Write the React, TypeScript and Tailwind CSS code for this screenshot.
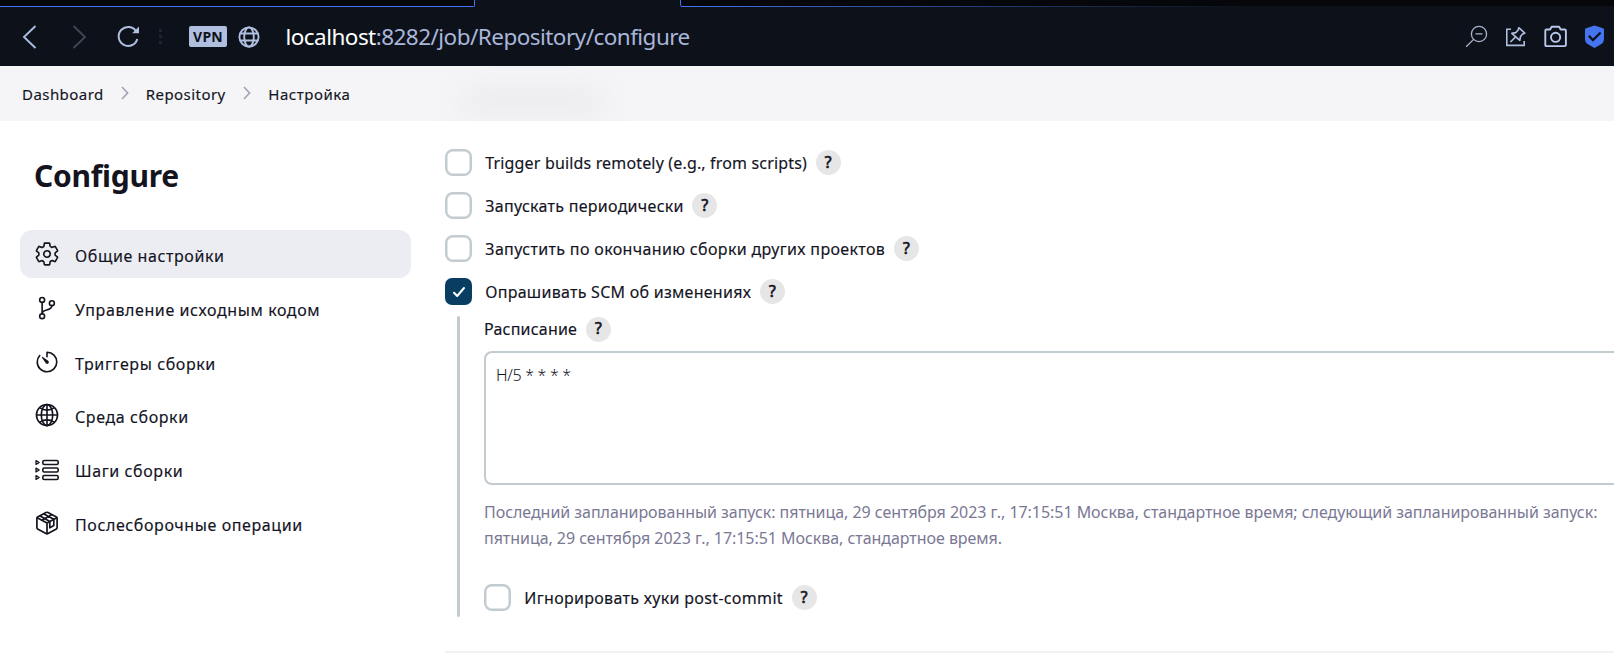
import type { ReactNode } from "react";
import {
  IoGitBranchOutline,
  IoGlobeOutline,
  IoSettingsOutline,
  IoTimerOutline,
} from "react-icons/io5";

function StepsIcon() {
  return (
    <svg className="relative top-[0.5px]" width="24" height="24" viewBox="0 0 24 24" fill="none" stroke="currentColor" strokeWidth="1.6" strokeLinejoin="round">
      <rect x="7.8" y="2.5" width="15.4" height="4" rx="1.5" />
      <rect x="7.8" y="10" width="15.4" height="4" rx="1.5" />
      <rect x="7.8" y="17.5" width="15.4" height="4" rx="1.5" />
      <path d="M1 2.6 4.2 4.5 1 6.4ZM1 10.1 4.2 12 1 13.9ZM1 17.6 4.2 19.5 1 21.4Z" strokeWidth="1.3" />
    </svg>
  );
}

function PackageIcon() {
  return (
    <svg className="relative top-[0.5px]" width="24" height="24" viewBox="0 0 24 24" fill="none" stroke="currentColor" strokeWidth="1.7" strokeLinejoin="round" strokeLinecap="round">
      <path d="M11 1.5Q12 1 13 1.5L21.4 6.1Q22.1 6.5 22.1 7.4V16.6Q22.1 17.5 21.4 17.9L13 22.6Q12 23.1 11 22.6L2.6 17.9Q1.9 17.5 1.9 16.6V7.4Q1.9 6.5 2.6 6.1Z" />
      <path d="M2.2 6.8 12 12 21.8 6.8M12 12V22.4" />
      <path d="M5.2 5 14.8 10.4V16.8L18.8 14.6V8.2L9 2.9M7.3 8.9 16.2 4.1" />
    </svg>
  );
}

const navItems: { label: string; icon: ReactNode; active?: boolean }[] = [
  { label: "Общие настройки", icon: <IoSettingsOutline size={26} />, active: true },
  { label: "Управление исходным кодом", icon: <IoGitBranchOutline size={26} /> },
  { label: "Триггеры сборки", icon: <IoTimerOutline size={26} /> },
  { label: "Среда сборки", icon: <IoGlobeOutline size={26} /> },
  { label: "Шаги сборки", icon: <StepsIcon /> },
  { label: "Послесборочные операции", icon: <PackageIcon /> },
];

function BrowserChrome() {
  return (
    <header className="h-[66px] bg-[#0d121a]">
      <div className="flex h-[7px] justify-between">
        <div className="w-[475px] rounded-br-[2px] border-r border-b border-[#4574f5] bg-[#06070b]" />
        <div className="flex w-[934px] flex-col rounded-bl-[3px] border-l border-[#4574f5] bg-[#06070b]">
          <div className="mt-auto h-px bg-linear-to-r from-[#4574f5] to-[#0d121a] to-60%" />
        </div>
      </div>
      <div className="flex h-[59px] items-center pl-[20px] text-[#b0bfe6]">
        <svg width="120" height="26" viewBox="20 0 120 26" fill="none" strokeWidth="1.9">
          <path d="M35.5 2 24 13 35.5 24" stroke="#a9bddf" />
          <path d="M73.5 2 85 13 73.5 24" stroke="#404552" />
          <path d="M136.3 7.5A9.5 9.5 0 1 0 137.3 15" stroke="#b0bfe0" strokeWidth="2" />
          <path d="M139 2.5V9.2H132.2Z" fill="#b0bfe0" />
        </svg>
        <div className="ml-[19px] flex w-[3px] flex-col gap-[3px]">
          <span className="size-[3px] bg-[#1d2330]" />
          <span className="size-[3px] bg-[#1d2330]" />
          <span className="size-[3px] bg-[#1d2330]" />
        </div>
        <div className="ml-[27px] flex h-[21px] w-[38px] items-center justify-center rounded-[2px] bg-[#b0bfe0] text-[14px] leading-none font-bold tracking-[0.2px] text-[#0d121a]">
          VPN
        </div>
        <svg className="ml-[10.5px]" width="22" height="22" viewBox="0 0 22 22" fill="none" stroke="#b0bfe0" strokeWidth="1.9">
          <circle cx="11" cy="11" r="9.6" />
          <ellipse cx="11" cy="11" rx="4.8" ry="9.6" />
          <path d="M2.3 7.5H19.7M2.3 14.5H19.7" />
        </svg>
        <div className="ml-[26px] text-[22.5px] leading-[30px] tracking-[-0.54px] whitespace-nowrap">
          <span className="text-white">localhost</span>
          <span className="text-[#aab6da]">:8282/job/Repository/configure</span>
        </div>
        <div className="mr-[9px] ml-auto flex items-center">
          <svg width="23" height="24" viewBox="0 0 23 24" fill="none" stroke="#a9b4cf" strokeWidth="1.3">
            <circle cx="14" cy="9" r="7.6" />
            <path d="M10.5 8.8H17.5M8.6 14.4 1.2 21.8" />
          </svg>
          <svg className="ml-[17px]" width="22" height="22" viewBox="0 0 22 22" fill="none" stroke="#b0bfe0" strokeWidth="1.6">
            <path d="M6 3.2H1.8V19.4H19.2V15" />
            <path d="M13.8 1.7 19.8 7.2 17.6 7.9 15.5 10.6 14.8 14.4 6.8 7.4 10.8 6.6 13 4.2Z" strokeLinejoin="round" />
            <path d="M10.4 11.2 5.4 16" />
          </svg>
          <svg className="ml-[17px]" width="24" height="24" viewBox="0.5 0.5 24 24" fill="none" stroke="#b9c7ea" strokeWidth="1.9" strokeLinejoin="round">
            <path d="M1.8 6.2Q1.8 5 3 5H6.6L8.2 2.2H15.6L17.2 5H21.2Q22.4 5 22.4 6.2V20.4Q22.4 21.6 21.2 21.6H3Q1.8 21.6 1.8 20.4Z" />
            <circle cx="12.1" cy="12.8" r="4.6" />
          </svg>
          <svg className="ml-[16px]" width="21" height="24" viewBox="0 0.5 21 24" fill="none">
            <path d="M10.5 1 19 3.8Q20 4.2 20 5.2V14.6Q20 17.4 17.8 19.2L10.5 23.6 3.2 19.2Q1 17.4 1 14.6V5.2Q1 4.2 2 3.8Z" fill="#4574f0" />
            <path d="M4.8 11.4 9 15.6 16.6 8" stroke="#0d121a" strokeWidth="2.2" />
          </svg>
        </div>
      </div>
    </header>
  );
}

function Crumb({ children }: { children: ReactNode }) {
  return <span className="text-[15px] leading-5">{children}</span>;
}

function CrumbSeparator() {
  return (
    <svg className="relative -top-px" width="8" height="14" viewBox="0 0 8 14" fill="none" stroke="#a3a2b8" strokeWidth="1.6">
      <path d="M1 1 6.6 7 1 13" />
    </svg>
  );
}

function Breadcrumbs() {
  return (
    <nav className="relative flex h-[55px] items-center overflow-hidden bg-[#f5f5f7] pl-[22px] tracking-[0.45px] [-webkit-text-stroke:0.15px_#14141f]">
      <div className="absolute top-[23px] left-[460px] h-[26px] w-[145px] rounded-full bg-[#ebebef] blur-[14px]" />
      <Crumb>Dashboard</Crumb>
      <span className="ml-[17px]"><CrumbSeparator /></span>
      <span className="ml-[17px]"><Crumb>Repository</Crumb></span>
      <span className="ml-[17.5px]"><CrumbSeparator /></span>
      <span className="ml-[17px] tracking-[0.55px]"><Crumb>Настройка</Crumb></span>
    </nav>
  );
}

function Sidebar() {
  return (
    <aside className="w-[391px] shrink-0">
      <h1 className="mt-[35px] pl-[14px] text-[30px] leading-[40px] font-bold tracking-[-0.25px]">Configure</h1>
      <ul className="mt-[34px] flex flex-col gap-[5.8px]">
        {navItems.map((item) => (
          <li
            key={item.label}
            className={`flex h-[48px] items-center rounded-[12px] pl-[14px] ${item.active ? "bg-[#ecedf3]" : ""}`}
          >
            <span className="flex w-[26px] justify-center">{item.icon}</span>
            <span className="ml-[15px] pt-[4px] text-[16px] leading-6 tracking-[0.6px] [-webkit-text-stroke:0.15px_#14141f]">{item.label}</span>
          </li>
        ))}
      </ul>
    </aside>
  );
}

function Help() {
  return (
    <span className="ml-[8.7px] flex size-[25px] items-center justify-center rounded-full bg-[#e6e6e6] text-[15.5px] leading-none tracking-normal [-webkit-text-stroke:0.7px_#14141f]">
      ?
    </span>
  );
}

function CheckboxRow({ label, checked, tracking = "tracking-[0.31px]" }: { label: string; checked?: boolean; tracking?: string }) {
  return (
    <div className="flex h-[27px] items-center">
      {checked ? (
        <span className="flex size-[27px] items-center justify-center rounded-[7px] bg-[#073e61]">
          <svg width="14" height="12" viewBox="0 0 14 12" fill="none" stroke="white" strokeWidth="2" strokeLinecap="round" strokeLinejoin="round">
            <path d="M2 6.8 5.2 10 12 2" />
          </svg>
        </span>
      ) : (
        <span className="size-[27px] rounded-[8px] border-2 border-[#c1cbd0] bg-white shadow-[inset_0_0_0_0.5px_#c1cbd0]" />
      )}
      <span className={`ml-[13.3px] text-[16px] leading-6 whitespace-nowrap [-webkit-text-stroke:0.15px_#14141f] ${tracking}`}>{label}</span>
      <Help />
    </div>
  );
}

function Triggers() {
  return (
    <main className="ml-[34px] min-w-0 flex-1 pt-[28px]">
      <div className="flex flex-col gap-4">
        <CheckboxRow label="Trigger builds remotely (e.g., from scripts)" tracking="tracking-[0.16px]" />
        <CheckboxRow label="Запускать периодически" tracking="tracking-[0.28px]" />
        <CheckboxRow label="Запустить по окончанию сборки других проектов" tracking="tracking-[0.35px]" />
        <CheckboxRow label="Опрашивать SCM об изменениях" tracking="tracking-[0.27px]" checked />
      </div>
      <div className="mt-[11px] ml-[12px] flex h-[301px]">
        <div className="w-[3px] shrink-0 rounded-full bg-[#c1cbd0]" />
        <div className="ml-[24px] min-w-0 flex-1">
          <div className="flex h-[26px] items-center">
            <span className="text-[16px] leading-6 tracking-[0.2px] [-webkit-text-stroke:0.15px_#14141f]">Расписание</span>
            <Help />
          </div>
          <div className="mt-[9px] h-[134px] rounded-l-[8px] border-2 border-r-0 border-[#c1cbd0] px-[10px] pt-[10px] text-[16px] leading-6 font-light tracking-[-0.3px]">
            H/5 * * * *
          </div>
          <p className="mt-[14px] text-[16px] leading-[26px] tracking-[-0.045px] whitespace-nowrap text-[#7a7894]">
            Последний запланированный запуск: пятница, 29 сентября 2023 г., 17:15:51 Москва, стандартное время; следующий запланированный запуск:
            <br />
            пятница, 29 сентября 2023 г., 17:15:51 Москва, стандартное время.
          </p>
          <div className="mt-[33px]">
            <CheckboxRow label="Игнорировать хуки post-commit" />
          </div>
        </div>
      </div>
      <div className="mt-[34px] h-[2px] bg-[#f1f1f6]" />
    </main>
  );
}

export default function App() {
  return (
    <div className="h-[663px] w-[1614px] overflow-hidden bg-white font-['Noto_Sans','Open_Sans',sans-serif] text-[#14141f]">
      <BrowserChrome />
      <Breadcrumbs />
      <div className="flex pl-[20px]">
        <Sidebar />
        <Triggers />
      </div>
    </div>
  );
}
